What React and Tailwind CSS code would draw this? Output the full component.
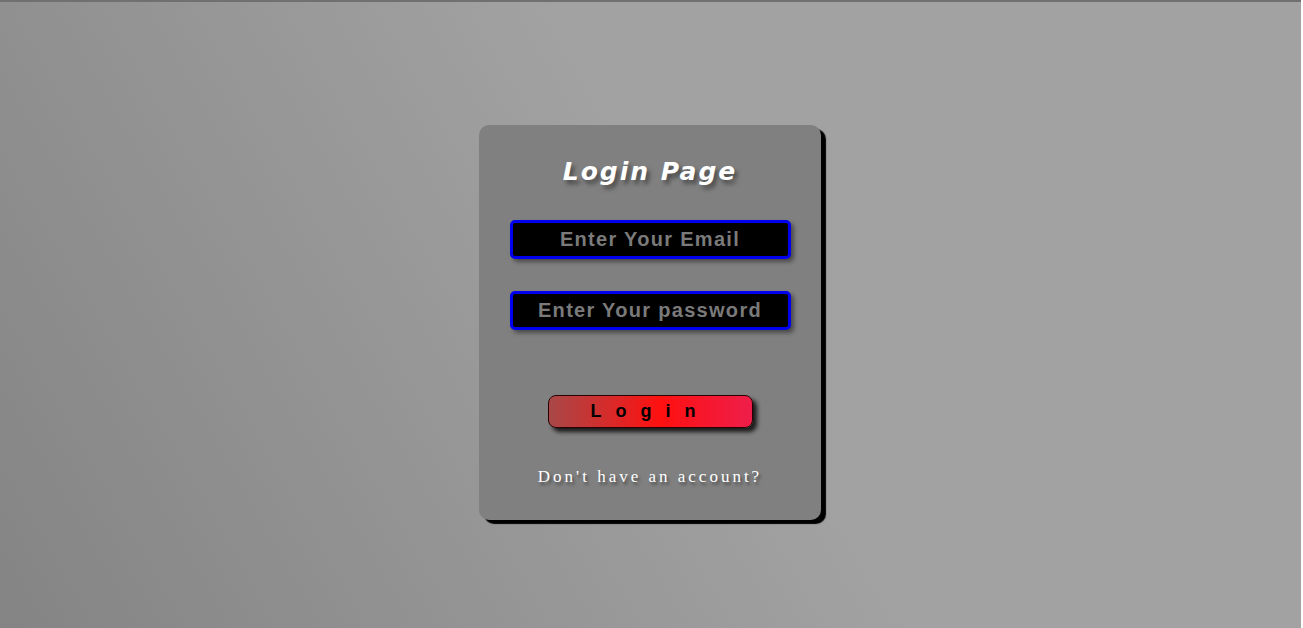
import React, { useState } from 'react';

const LoginCard = () => {
  const [email, setEmail] = useState('');
  const [password, setPassword] = useState('');

  return (
    <div className="w-[342px] h-[395px] bg-[#808080] rounded-[10px] shadow-[5px_4px_1px_#000] flex flex-col items-center pt-[30px]">
      {/* Title */}
      <h1 className="text-white text-[25px] leading-[34px] font-bold italic tracking-[2px] [text-shadow:3px_4px_4px_#4a4a4a] font-['DejaVu_Sans',sans-serif]">
        Login Page
      </h1>

      {/* Fields */}
      <input
        type="email"
        placeholder="Enter Your Email"
        value={email}
        onChange={(e) => setEmail(e.target.value)}
        className="mt-[31px] w-[281px] h-[39px] bg-black border-[3px] border-[#0000f0] rounded-[5px] shadow-[3px_3px_4px_#4a4a4a] text-center text-[20px] font-bold tracking-[1.3px] text-[#808080] placeholder:text-[#7a7a7a] outline-none font-['Liberation_Sans',Arial,sans-serif]"
      />
      <input
        type="password"
        placeholder="Enter Your password"
        value={password}
        onChange={(e) => setPassword(e.target.value)}
        className="mt-[32px] w-[281px] h-[39px] bg-black border-[3px] border-[#0000f0] rounded-[5px] shadow-[3px_3px_4px_#4a4a4a] text-center text-[20px] font-bold tracking-[1.3px] text-[#808080] placeholder:text-[#7a7a7a] outline-none font-['Liberation_Sans',Arial,sans-serif]"
      />

      {/* Submit */}
      <button className="mt-[65px] w-[205px] h-[33px] rounded-[8px] border border-[#2a0000] bg-[linear-gradient(90deg,#a84848_0%,#ff1010_55%,#ee1e4a_100%)] shadow-[4px_4px_4px_#1a1a1a] text-black text-[18px] font-bold tracking-[14px] font-['Liberation_Sans',Arial,sans-serif]">
        Login
      </button>

      <p className="mt-[36px] text-white text-[17px] tracking-[3px] [text-shadow:2px_3px_3px_#4a4a4a] font-['Liberation_Serif','Times_New_Roman',serif]">
        Don't have an account?
      </p>
    </div>
  );
};

export default function App() {
  return (
    <div className="w-[1301px] h-[628px] border-t-2 border-[#707070] bg-[linear-gradient(60deg,#848484_0%,#a2a2a2_55%,#a2a2a2_100%)] flex justify-center pt-[123px] pr-px">
      <LoginCard />
    </div>
  );
}
